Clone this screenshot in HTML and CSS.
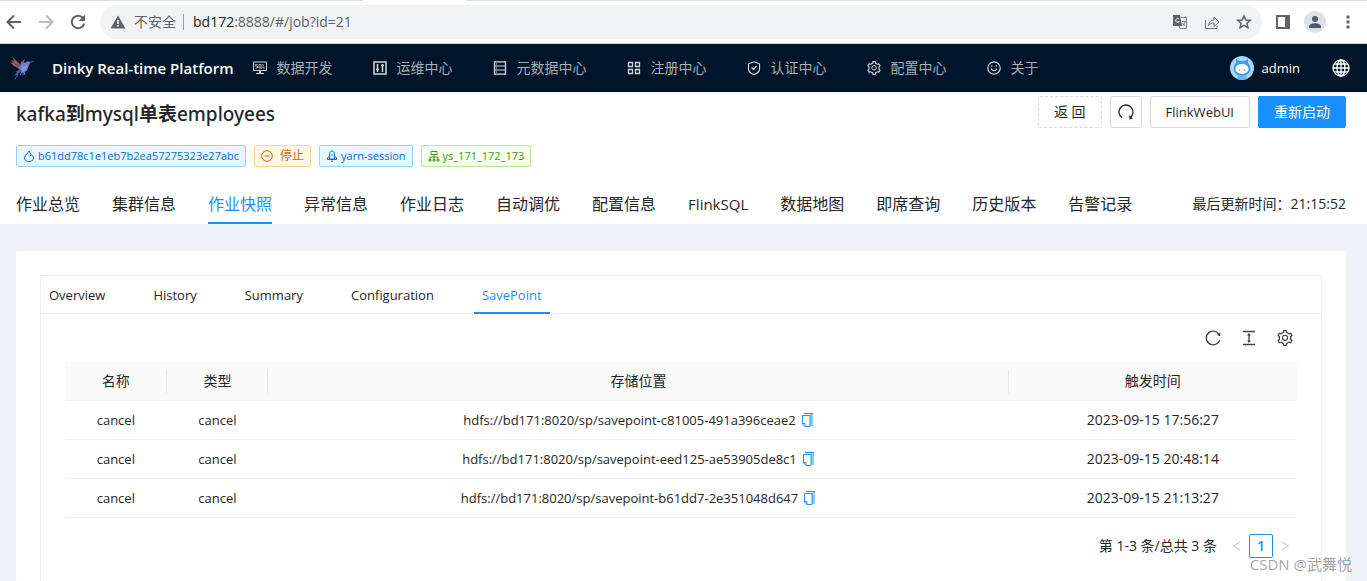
FILE: index.html
```html
<!DOCTYPE html>
<html lang="zh-CN">
<head>
<meta charset="utf-8">
<title>Dinky Real-time Platform</title>
<link rel="stylesheet" href="styles.css">
</head>
<body>
<svg class="sprite" aria-hidden="true">
  <symbol id="i-reload" viewBox="64 64 896 896"><path d="M909.1 209.3l-56.4 44.1C775.8 155.1 656.2 92 521.9 92 290 92 102.3 279.5 102 511.5 101.7 743.7 289.8 932 521.9 932c181.3 0 335.8-115 394.6-276.1 1.5-4.2-.7-8.9-4.9-10.3l-56.7-19.5a8 8 0 00-10.1 4.8c-1.8 5-3.8 10-5.9 14.9-17.3 41-42.1 77.8-73.7 109.4A344.77 344.77 0 01655.9 829c-42.3 17.9-87.4 27-133.8 27-46.5 0-91.5-9.1-133.8-27A341.5 341.5 0 01279 755.2a342.16 342.16 0 01-73.7-109.4c-17.9-42.4-27-87.4-27-133.9s9.1-91.5 27-133.9c17.3-41 42.1-77.8 73.7-109.4 31.6-31.6 68.4-56.4 109.3-73.8 42.3-17.9 87.4-27 133.8-27 46.5 0 91.5 9.1 133.8 27a341.5 341.5 0 01109.3 73.8c9.9 9.9 19.2 20.4 27.8 31.4l-60.2 47a8 8 0 003 14.1l175.6 43c5 1.2 9.9-2.6 9.9-7.7l.8-180.9c-.1-6.6-7.8-10.3-13-6.2z"/></symbol>
  <symbol id="i-height" viewBox="64 64 896 896"><path d="M840 836H184c-4.400 0-8 3.600-8 8v60c0 4.400 3.600 8 8 8h656c4.400 0 8-3.600 8-8v-60c0-4.400-3.600-8-8-8zm0-724H184c-4.400 0-8 3.600-8 8v60c0 4.400 3.600 8 8 8h656c4.400 0 8-3.600 8-8v-60c0-4.400-3.600-8-8-8zM610.800 378c6 0 9.400-7 5.700-11.700L515.700 238.700a7.140 7.140 0 00-11.300 0L403.600 366.300a7.230 7.230 0 005.700 11.700H476v268h-62.800c-6 0-9.400 7-5.700 11.700l100.800 127.500c2.900 3.700 8.500 3.700 11.300 0l100.800-127.500c3.700-4.700.4-11.700-5.700-11.700H548V378h62.800z"/></symbol>
  <symbol id="i-gear" viewBox="64 64 896 896"><path d="M924.8 625.7l-65.5-56c3.1-19 4.7-38.4 4.7-57.8s-1.6-38.800-4.700-57.800l65.500-56a32.030 32.030 0 009.300-35.200l-.9-2.600a443.740 443.740 0 00-79.700-137.900l-1.800-2.100a32.120 32.120 0 00-35.100-9.500l-81.300 28.900c-30-24.600-63.500-44-99.700-57.600l-15.700-85a32.050 32.050 0 00-25.800-25.700l-2.700-.5c-52.100-9.400-106.900-9.400-159 0l-2.700.5a32.050 32.050 0 00-25.800 25.700l-15.800 85.400a351.860 351.860 0 00-99 57.400l-81.900-29.100a32 32 0 00-35.100 9.500l-1.800 2.100a446.020 446.020 0 00-79.700 137.900l-.9 2.600c-4.500 12.500-.8 26.500 9.300 35.200l66.300 56.600c-3.100 18.800-4.600 38-4.600 57.100 0 19.200 1.500 38.400 4.600 57.100L99 625.500a32.030 32.030 0 00-9.300 35.200l.9 2.600c18.100 50.400 44.900 96.900 79.700 137.900l1.800 2.100a32.120 32.120 0 0035.100 9.500l81.900-29.100c29.800 24.500 63.100 43.900 99 57.400l15.800 85.400a32.050 32.050 0 0025.800 25.700l2.700.5a449.400 449.400 0 00159 0l2.700-.5a32.050 32.050 0 0025.800-25.700l15.700-85a350 350 0 0099.700-57.600l81.300 28.900a32 32 0 0035.100-9.500l1.800-2.100c34.800-41.100 61.600-87.500 79.700-137.900l.9-2.600c4.500-12.300.8-26.300-9.300-35zM788.300 465.900c2.500 15.100 3.800 30.600 3.800 46.100s-1.300 31-3.800 46.100l-6.600 40.100 74.700 63.900a370.030 370.030 0 01-42.600 73.600L721 702.800l-31.400 25.800c-23.900 19.600-50.500 35-79.300 45.800l-38.100 14.300-17.900 97a377.500 377.500 0 01-85 0l-17.900-97.200-37.800-14.500c-28.500-10.800-55-26.200-78.700-45.700l-31.400-25.900-93.400 33.200c-17-22.900-31.200-47.600-42.600-73.600l75.500-64.500-6.500-40c-2.400-14.900-3.700-30.300-3.700-45.500 0-15.300 1.200-30.600 3.700-45.500l6.500-40-75.500-64.500c11.300-26.100 25.600-50.700 42.600-73.600l93.400 33.200 31.400-25.900c23.700-19.500 50.200-34.900 78.700-45.700l37.900-14.300 17.900-97.200c28.100-3.200 56.800-3.200 85 0l17.900 97 38.100 14.300c28.700 10.800 55.400 26.200 79.300 45.800l31.400 25.800 92.800-32.900c17 22.900 31.200 47.600 42.600 73.600L781.800 426l6.500 39.900z"/><circle cx="512" cy="502" r="144" fill="none" stroke="currentColor" stroke-width="64"/></symbol>
  <symbol id="i-copy" viewBox="0 0 14 14"><path d="M10 1h3v12h-3z" fill="#8fc8ff"/><path d="M4 .5h9" stroke="#1890ff"/><path d="M2.500 2.500h7.500v11H5L2.500 11z" fill="#fff" stroke="#1890ff"/><path d="M2.500 10.500H5v3" fill="none" stroke="#1890ff"/></symbol>
</svg>

<div class="browser">
  <div class="tabstrip"><i class="strip-left"></i><i class="strip-tab"></i><i class="strip-right"></i></div>
  <div class="toolbar">
    <div class="tools-left">
      <button aria-label="后退"><svg width="16" height="16" viewBox="0 0 16 16" fill="none" stroke="#5f6368" stroke-width="2"><path d="M15 8H2M8 1.500L1.500 8 8 14.500"/></svg></button>
      <button aria-label="前进"><svg width="16" height="16" viewBox="0 0 16 16" fill="none" stroke="#babcbe" stroke-width="2"><path d="M1 8h13M8 1.500L14.500 8 8 14.500"/></svg></button>
      <button aria-label="刷新"><svg width="16" height="16" viewBox="0 0 16 16"><path d="M13 4A6.300 6.300 0 1 0 14.200 9.500" fill="none" stroke="#5f6368" stroke-width="2"/><path d="M15 0.500V7H8.500z" fill="#5f6368"/></svg></button>
    </div>
    <div class="omnibox">
      <svg width="16" height="16" viewBox="0 0 16 16"><path d="M8 1.500L15.500 14.500H.5z" fill="#5f6368"/><path d="M7.200 6h1.600v4H7.200zm0 5h1.600v1.600H7.200z" fill="#fff"/></svg>
      <span class="insecure">不安全</span>
      <span class="url"><b>bd172</b>:8888/#/job?id=21</span>
      <button aria-label="翻译"><svg width="16" height="16" viewBox="0 0 16 16"><path d="M1 1h7l2 11H1z" fill="#5f6368"/><path d="M9 3.500h5.500v11H8L7 12" fill="none" stroke="#80858a"/><path d="M7 5a2 2 0 1 0 .3 2.500H5.500" fill="none" stroke="#e0e2e4"/><path d="M10 7.500h4M13 8c-.5 2-1.500 3-2.500 4M10.500 9l2.500 3" fill="none" stroke="#80858a"/></svg></button>
      <button aria-label="分享"><svg width="16" height="16" viewBox="0 0 16 16" fill="none" stroke="#6b6f73" stroke-width="1"><path d="M1.500 6v8.500H13v-3M4.500 11.500C5 7.500 7 6 10 6V3l5 5-5 4.500V9C7.500 9 6 9.500 4.500 11.500z"/></svg></button>
      <button aria-label="收藏"><svg width="16" height="16" viewBox="0 0 16 16" fill="none" stroke="#5f6368" stroke-width="1.500"><path d="M8 2l1.800 4 4.400.4-3.300 2.900 1 4.300L8 11.300l-3.900 2.300 1-4.300L1.800 6.400 6.200 6z"/></svg></button>
    </div>
    <div class="tools-right">
      <button aria-label="侧边栏"><svg width="14" height="14" viewBox="0 0 14 14"><path d="M1 1h12v12H1z" fill="none" stroke="#5f6368" stroke-width="2"/><path d="M9 0h5v14H9z" fill="#5f6368"/></svg></button>
      <button class="profile" aria-label="用户"><svg width="22" height="22" viewBox="0 0 22 22"><circle cx="11" cy="11" r="11" fill="#dee1e6"/><circle cx="11" cy="8" r="3" fill="#4f5a73"/><path d="M5 17v-1.500c0-4.500 12-4.500 12 0V17z" fill="#4f5a73"/></svg></button>
      <button aria-label="菜单"><svg width="4" height="14" viewBox="0 0 4 14" fill="#5f6368"><path d="M.5.500h3v3h-3zm0 5h3v3h-3zm0 5h3v3h-3z"/></svg></button>
    </div>
  </div>
</div>

<header class="topbar">
  <a class="brand" href="#">
    <svg width="28" height="30" viewBox="0 0 28 30"><path d="M11 16L5 12.500 2 9l3 .8-2-3.300 3.500 2L4 3.500l6 5.500 4 5z" fill="#79535f"/><path d="M7 12.500L4 10M9 11L6 7.500" stroke="#b77986" stroke-width=".7" fill="none"/><path d="M12 13l1-4 4-3.500-1 3.500 1 4z" fill="#8a5a78"/><path d="M11 15c1-4 5-5.500 7-5.500 1-1.500 2.500-1.500 3.500-.7l5.500-.8-5 1.700c-1 3-2 4-2.500 6.300-1 3-4 4-7 3z" fill="#7b7bcb"/><path d="M14 14c2.500 0 4-1 5-2-.5 4-2 7-5.500 7.500z" fill="#719ae8"/><path d="M18.500 12c.8 1 .3 3.500-1 4.500z" fill="#3fe0d8"/><path d="M12 16l-5 3 2 .5-3 3 2.500-.5-2.500 6 3-4 1.500-3.500L14 18z" fill="#54538c"/><path d="M14 19l-2 3m4-3l1 3m-2-3v3" stroke="#4a89d8" fill="none"/></svg>
    <span>Dinky Real-time Platform</span>
  </a>
  <nav class="mainnav">
    <a href="#"><svg viewBox="0 0 14 14"><path d="M.5 1h13v8.500H.5z" fill="none" stroke="currentColor"/><path d="M4.500 3.500h-2V5h2v2h-2M6 3.500h2V7H6zM7.500 6.500L8.500 8M10 3v4h2" fill="none" stroke="currentColor" stroke-width=".8"/><path d="M6 10h2v2.500H6zM3 12h8v1H3z"/></svg>数据开发</a>
    <a href="#"><svg viewBox="0 0 14 14" fill="none" stroke="currentColor"><path d="M1 1h12v12H1z" stroke-width="1.500"/><path d="M4.500 3v8M9.500 3v8M3 8.500h3M8 4.500h3" stroke-width="1.500"/></svg>运维中心</a>
    <a href="#"><svg viewBox="0 0 14 14" fill="none" stroke="currentColor"><path d="M1.500.8h11v12.400h-11z" stroke-width="1.300"/><path d="M2 5h10M2 9h10"/><path d="M3.500 2.500v1M3.500 6.500v1M3.500 10.500v1" stroke-width="1.300"/></svg>元数据中心</a>
    <a href="#"><svg viewBox="0 0 14 14" fill="none" stroke="currentColor" stroke-width="1.300"><path d="M1.500 1.500h4v4h-4zM8.500 1.500h4v4h-4zM1.500 8.500h4v4h-4zM8.500 8.500h4v4h-4z"/></svg>注册中心</a>
    <a href="#"><svg viewBox="0 0 14 14" fill="none" stroke="currentColor" stroke-width="1.200"><path d="M7 .8l5.500 2V8c0 2.500-2.500 4.500-5.500 5.500C4 12.500 1.500 10.500 1.500 8V2.800zM4.500 6.500l2 2 3-3.500"/></svg>认证中心</a>
    <a href="#"><svg><use href="#i-gear"/></svg>配置中心</a>
    <a href="#"><svg viewBox="0 0 14 14" fill="none" stroke="currentColor" stroke-width="1.200"><circle cx="7" cy="7" r="6.200"/><path d="M4.300 7.500c.6 3 4.800 3 5.400 0M4 4.800h1.500M8.500 4.800H10"/></svg>关于</a>
  </nav>
  <div class="account">
    <a href="#" class="user"><svg width="24" height="24" viewBox="0 0 24 24"><circle cx="12" cy="12" r="12" fill="#a9d5fa"/><path d="M6 3l3.500 2h5L18 3v4c3 3 3 8 0 11-3 2.500-9 2.500-12 0-3-3-3-8 0-11z" fill="#3f9eee"/><ellipse cx="12" cy="13" rx="6.500" ry="5" fill="#fff"/><path d="M9.500 13v2M14.500 13v2" stroke="#84c1ef"/><path d="M8 19.500h8l1 3c-3 1.500-7 1.500-10 0z" fill="#69b5f6"/></svg><span>admin</span></a>
    <button class="globe" aria-label="语言"><svg width="18" height="18" viewBox="0 0 18 18" fill="none" stroke="#fff" stroke-width="1.300"><circle cx="9" cy="9" r="8"/><ellipse cx="9" cy="9" rx="4" ry="8"/><path d="M9 1v16M1 9h16M2.200 5h13.600M2.200 13h13.600"/></svg></button>
  </div>
</header>

<section class="pagehead">
  <div class="titlerow">
    <h1>kafka<b>到</b>mysql<b>单表</b>employees</h1>
    <div class="actions">
      <button class="btn dashed">返 回</button>
      <button class="btn square" aria-label="刷新状态"><svg width="16" height="16" viewBox="0 0 16 16"><path d="M4 13.800A7 7 0 1 1 12.300 13.500" fill="none" stroke="#262626" stroke-width="1.300"/><path d="M11 11l.5 4.300 3.500-.8z" fill="#262626"/></svg></button>
      <button class="btn latin">FlinkWebUI</button>
      <button class="btn primary">重新启动</button>
    </div>
  </div>
  <div class="tags">
    <span class="tag blue"><svg viewBox="0 0 12 12" fill="none" stroke="currentColor"><path d="M6 .8C6 3 1.500 4.500 1.500 7.800a4.500 3.700 0 0 0 9 0C10.500 6.500 9.500 5.500 8.500 4.800L7.500 6C7.600 4 7 2 6 .8z"/></svg>b61dd78c1e1eb7b2ea57275323e27abc</span>
    <span class="tag orange"><svg viewBox="0 0 12 12" fill="none" stroke="currentColor"><circle cx="6" cy="6" r="5.300"/><path d="M3.500 6h5"/></svg>停止</span>
    <span class="tag blue"><svg viewBox="0 0 12 12" fill="none" stroke="currentColor"><path d="M3.500 9V4.500C3.500 2.500 4.500 1.500 6 .7 7.500 1.500 8.500 2.500 8.500 4.500V9zM3.500 6L1.500 8v1.500h9V8L8.500 6M5 11.200h2M5 5h2"/></svg>yarn-session</span>
    <span class="tag green"><svg viewBox="0 0 12 12" fill="none" stroke="currentColor"><path d="M3 1.500h6v3H3zM6 4.500V7M2 9V7h8v2M6 7v2M1 9.500h2v1.500H1zM5 9.500h2v1.500H5zM9 9.500h2v1.500H9z"/></svg>ys_171_172_173</span>
  </div>
  <div class="tabrow">
    <nav class="tabs">
      <a href="#">作业总览</a><a href="#">集群信息</a><a href="#" class="on">作业快照</a><a href="#">异常信息</a><a href="#">作业日志</a><a href="#">自动调优</a><a href="#">配置信息</a><a href="#" class="latin">FlinkSQL</a><a href="#">数据地图</a><a href="#">即席查询</a><a href="#">历史版本</a><a href="#">告警记录</a>
    </nav>
    <span class="updated">最后更新时间：21:15:52</span>
  </div>
</section>

<main class="content">
  <div class="card">
    <div class="panel">
      <nav class="subtabs">
        <a href="#">Overview</a><a href="#">History</a><a href="#">Summary</a><a href="#">Configuration</a><a href="#" class="on">SavePoint</a>
      </nav>
      <div class="panelbody">
        <div class="tabletools">
          <button aria-label="刷新表格"><svg><use href="#i-reload"/></svg></button>
          <button aria-label="密度"><svg><use href="#i-height"/></svg></button>
          <button aria-label="列设置"><svg><use href="#i-gear"/></svg></button>
        </div>
        <table>
          <colgroup><col class="c-name"><col class="c-type"><col class="c-path"><col class="c-time"></colgroup>
          <thead><tr><th>名称</th><th>类型</th><th>存储位置</th><th>触发时间</th></tr></thead>
          <tbody>
            <tr><td>cancel</td><td>cancel</td><td><div class="path">hdfs://bd171:8020/sp/savepoint-c81005-491a396ceae2<button aria-label="复制"><svg><use href="#i-copy"/></svg></button></div></td><td class="time">2023-09-15 17:56:27</td></tr>
            <tr><td>cancel</td><td>cancel</td><td><div class="path">hdfs://bd171:8020/sp/savepoint-eed125-ae53905de8c1<button aria-label="复制"><svg><use href="#i-copy"/></svg></button></div></td><td class="time">2023-09-15 20:48:14</td></tr>
            <tr><td>cancel</td><td>cancel</td><td><div class="path">hdfs://bd171:8020/sp/savepoint-b61dd7-2e351048d647<button aria-label="复制"><svg><use href="#i-copy"/></svg></button></div></td><td class="time">2023-09-15 21:13:27</td></tr>
          </tbody>
        </table>
        <div class="pager">
          <span class="total">第 1-3 条/总共 3 条</span>
          <button class="arrow" aria-label="上一页" disabled><svg viewBox="0 0 12 12"><path d="M9 2L2.500 6 9 10"/></svg></button>
          <button class="page">1</button>
          <button class="arrow" aria-label="下一页" disabled><svg viewBox="0 0 12 12"><path d="M3 2l6.500 4L3 10"/></svg></button>
        </div>
      </div>
    </div>
  </div>
</main>
<div class="watermark">CSDN @武舞悦</div>
</body>
</html>
```
FILE: styles.css
```css
* { box-sizing: border-box; }
body {
  margin: 0;
  min-height: 100vh;
  display: flex;
  flex-direction: column;
  overflow: hidden;
  position: relative;
  background: #f0f1f6;
  color: #262626;
  font: 14px/22px "Open Sans", "Noto Sans CJK SC", sans-serif;
}
a { color: inherit; text-decoration: none; }
button {
  margin: 0;
  padding: 0;
  border: 0;
  background: none;
  color: inherit;
  font: inherit;
  display: flex;
  align-items: center;
  justify-content: center;
}
svg { display: block; flex: none; }
svg:not([fill]) { fill: currentColor; }
.sprite { position: absolute; width: 0; height: 0; }

/* Browser chrome */
.browser { background: #fff; border-bottom: 1px solid #dadce0; }
.tabstrip { display: flex; height: 1px; }
.strip-left { flex: 0 0 363px; background: #dee1e6; }
.strip-tab { flex: 0 0 103px; }
.strip-right { flex: 1; background: #dee1e6; }
.toolbar { display: flex; align-items: center; padding: 4px 17px 4px 6px; }
.tools-left { display: flex; gap: 16px; margin-right: 14px; }
.omnibox {
  flex: 1;
  display: flex;
  align-items: center;
  height: 34px;
  padding: 0 10px;
  border-radius: 17px;
  background: #f1f3f4;
}
.omnibox button { margin-left: 16px; }
.insecure { margin: 0 7px 0 8px; color: #5f6368; }
.url { flex: 1; padding-left: 9px; border-left: 1px solid #9aa0a6; line-height: 16px; color: #5f6368; }
.url b { font-weight: 400; color: #202124; }
.tools-right { display: flex; align-items: center; gap: 14px; margin-left: 14px; }
.tools-right .profile { margin-right: 6px; }

/* Application header */
.topbar {
  display: flex;
  align-items: center;
  height: 48px;
  padding: 0 17px 0 8px;
  background: #001529;
  color: #fff;
}
.brand { display: flex; align-items: center; gap: 16px; font-size: 15px; font-weight: 600; }
.mainnav { display: flex; gap: 40px; margin-left: 19px; color: #a6adb4; }
.mainnav a { display: flex; align-items: center; gap: 10px; }
.mainnav svg { width: 14px; height: 14px; color: #d2d6da; }
.account { display: flex; align-items: center; gap: 32px; margin-left: auto; }
.user { display: flex; align-items: center; gap: 8px; font-size: 13px; }

/* Job header */
.pagehead { background: linear-gradient(#eef1f1, #fff 3px); padding: 4px 21px 0 16px; }
.titlerow { display: flex; justify-content: space-between; }
h1 { margin: 0; font: 500 19px/36px "Noto Sans", "Noto Sans CJK SC", sans-serif; }
h1 b { font-weight: 700; }
.actions { display: flex; gap: 8px; }
.btn { height: 32px; padding: 0 15px; border: 1px solid #d9d9d9; border-radius: 2px; background: #fff; }
.btn.latin { font-size: 13px; }
.dashed { border-style: dashed; }
.square { width: 32px; padding: 0; }
.primary { border-color: #1890ff; background: #1890ff; color: #fff; }
.tags { display: flex; gap: 8px; margin-top: 13px; }
.tag {
  display: flex;
  align-items: center;
  gap: 3px;
  height: 22px;
  padding: 0 6px;
  border: 1px solid;
  border-radius: 2px;
  font-size: 11px;
  line-height: 20px;
}
.tag svg { width: 12px; height: 12px; }
.blue { color: #096dd9; background: #e6f7ff; border-color: #91d5ff; }
.orange { gap: 7px; font-size: 12px; color: #d46b08; background: #fff7e6; border-color: #ffd591; }
.green { color: #389e0d; background: #f6ffed; border-color: #b7eb8f; }
.tabrow { display: flex; justify-content: space-between; align-items: center; margin-top: 17px; }
.tabs { display: flex; gap: 32px; font-size: 16px; }
.tabs a { padding: 8px 0; line-height: 24px; white-space: nowrap; }
.tabs .latin { font-size: 15px; }
.tabs .on, .subtabs .on { color: #1890ff; box-shadow: inset 0 -2px #1890ff; }
.updated { white-space: nowrap; }

/* Snapshot card */
.content { flex: 1; display: flex; padding: 27px 21px 0 16px; }
.card { flex: 1; display: flex; padding: 24px 24px 0; border-radius: 2px; background: #fff; }
.panel { flex: 1; border: 1px solid #f0f0f0; border-bottom: 0; }
.subtabs { display: flex; gap: 32px; font-size: 13px; box-shadow: inset 0 -1px #f0f0f0; }
.subtabs a { padding: 8px; }
.panelbody { padding: 0 24px; }
.tabletools { display: flex; justify-content: flex-end; gap: 20px; padding: 16px 4px; color: #404040; }
.tabletools svg { width: 16px; height: 16px; }
table { width: 100%; table-layout: fixed; border-collapse: separate; border-spacing: 0; text-align: center; }
.c-name, .c-type { width: 8.25%; }
.c-time { width: 23.4%; }
th, td { height: 39px; padding: 8px; border-bottom: 1px solid #f0f0f0; }
td { font-size: 13px; }
td.time { font-size: 14px; }
th {
  font-weight: 400;
  background: linear-gradient(#e8e8e8, #e8e8e8) right center / 1px 23px no-repeat #fafafa;
}
th:last-child { background: #fafafa; }
.path { display: flex; align-items: center; justify-content: center; gap: 4px; }
.path svg { width: 14px; height: 14px; }
.pager { display: flex; align-items: center; justify-content: flex-end; margin-top: 16px; }
.total { margin-right: 8px; }
.arrow { width: 24px; height: 24px; }
.arrow svg { width: 12px; height: 12px; fill: none; stroke: #bfbfbf; }
.page { width: 24px; height: 24px; border: 1px solid #1890ff; border-radius: 2px; background: #fff; color: #1890ff; font-weight: 600; }
.watermark { position: absolute; right: 15px; bottom: 6px; font-size: 15px; color: #8c8c8ccc; }
```
